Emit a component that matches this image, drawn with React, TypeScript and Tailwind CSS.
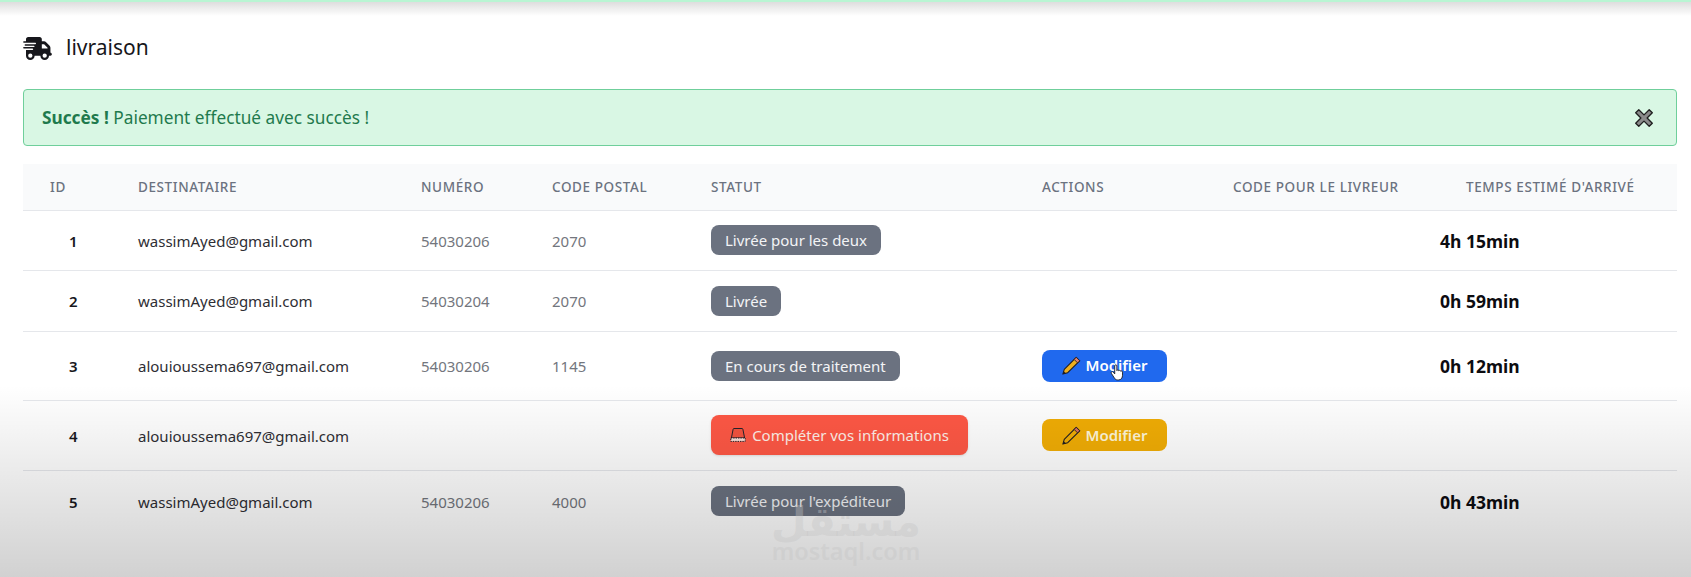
import React from 'react';
import { FaTruckFast } from 'react-icons/fa6';

const Pencil: React.FC<{ body: string; tip: string }> = ({ body, tip }) => (
  <svg viewBox="0 0 20 20" className="w-[21px] h-[21px] shrink-0 -mx-[1px]">
    <path d="M14.5 2.2 17.8 5.5 6.4 16.9 1.8 18.2 3.1 13.6Z" fill={body} stroke="#1c1c24" strokeWidth="1" strokeLinejoin="round" />
    <path d="M14.5 2.2 17.8 5.5 15.8 7.5 12.5 4.2Z" fill={tip} stroke="#1c1c24" strokeWidth="0.8" strokeLinejoin="round" />
    <path d="M1.8 18.2 2.6 15.4 4.6 17.4Z" fill="#1c1c24" />
  </svg>
);

const Siren = () => (
  <svg viewBox="0 0 16 16" className="w-[16px] h-[16px] shrink-0">
    <path d="M4 1.5h8c.5 0 .8.3.9.8L14.6 11H1.4L3.1 2.3c.1-.5.4-.8.9-.8Z" fill="#f4533f" stroke="#23232b" strokeWidth="1" strokeLinejoin="round" />
    <path d="M.8 11h14.4v3.4H.8Z" fill="#f9ddd6" stroke="#23232b" strokeWidth="1" strokeDasharray="1.4 1" />
  </svg>
);

const CloseMark = () => (
  <svg viewBox="0 0 20 20" className="w-[26px] h-[26px]">
    <path d="M3.6 6 6 3.6 10 7.6 14 3.6 16.4 6 12.4 10 16.4 14 14 16.4 10 12.4 6 16.4 3.6 14 7.6 10Z" fill="#8b8b8b" stroke="#1f1f1f" strokeWidth="1" strokeLinejoin="round" />
  </svg>
);

const HandCursor = () => (
  <svg viewBox="0 0 16 20" className="w-[14px] h-[21px]">
    <path d="M5.4 2.4c0-1.6 2.4-1.6 2.4 0v5.4c.5-1.1 2.2-.9 2.3.3.5-.9 2.1-.7 2.2.5.6-.6 2-.3 2 1v3.6c0 2.9-1.7 5.3-4.4 5.3H8.5c-1.6 0-2.6-.8-3.5-2.2L1.6 11c-.9-1.5 1-2.8 2.1-1.4l1.7 2Z" fill="#fff" stroke="#1b1b1b" strokeWidth="1" strokeLinejoin="round" />
  </svg>
);

const rows = [
  { id: 1, mail: 'wassimAyed@gmail.com', num: '54030206', cp: '2070', status: 'Livrée pour les deux', eta: '4h 15min', h: 'h-[60px]' },
  { id: 2, mail: 'wassimAyed@gmail.com', num: '54030204', cp: '2070', status: 'Livrée', eta: '0h 59min', h: 'h-[61px]' },
  { id: 3, mail: 'alouioussema697@gmail.com', num: '54030206', cp: '1145', status: 'En cours de traitement', eta: '0h 12min', h: 'h-[69px]', action: 'blue' },
  { id: 4, mail: 'alouioussema697@gmail.com', num: '', cp: '', status: '', eta: '', h: 'h-[70px]', action: 'amber' },
  { id: 5, mail: 'wassimAyed@gmail.com', num: '54030206', cp: '4000', status: "Livrée pour l'expéditeur", eta: '0h 43min', h: 'h-[62px]' },
];

const headers = [
  { label: 'ID', cls: 'w-[89px] pl-[27px]' },
  { label: 'DESTINATAIRE', cls: 'w-[283px] pl-[26px]' },
  { label: 'NUMÉRO', cls: 'w-[157px] pl-[26px]' },
  { label: 'CODE POSTAL', cls: 'w-[159px]' },
  { label: 'STATUT', cls: 'w-[331px]' },
  { label: 'ACTIONS', cls: 'w-[191px]' },
  { label: 'CODE POUR LE LIVREUR', cls: 'w-[207px]' },
  { label: "TEMPS ESTIMÉ D'ARRIVÉ", cls: 'pl-[26px]' },
];

export default function App() {
  return (
    <div className="relative h-[577px] w-full overflow-hidden bg-white font-['Noto_Sans',sans-serif]">
      <div className="pl-[23px] pr-[14px] pt-[33px]">
        <div className="flex items-center gap-[14px] h-[30px]">
          <FaTruckFast className="w-[29px] h-[23px] text-[#17171c]" />
          <h1 className="text-[21px] text-[#17171c]">livraison</h1>
        </div>

        <div className="mt-[26px] flex h-[57px] items-center justify-between rounded-[4px] border border-[#6fcf9b] bg-[#d9f7e4] pl-[18px] pr-[19px] text-[17.25px] text-[#1f7a4d]">
          <p className="pt-[1px]">
            <span className="font-bold">Succès !</span> Paiement effectué avec succès !
          </p>
          <CloseMark />
        </div>

        <table className="mt-[18px] w-full table-fixed border-collapse">
          <thead>
            <tr className="h-[46px] bg-[#f9fafb] border-b border-[#e5e7eb]">
              {headers.map((col) => (
                <th key={col.label} className={`${col.cls} text-left text-[13.5px] font-medium tracking-[0.6px] text-[#6b7280]`}>
                  {col.label}
                </th>
              ))}
            </tr>
          </thead>
          <tbody>
            {rows.map((row, i) => (
              <tr key={row.id} className={`${row.h} ${i < rows.length - 1 ? 'border-b border-[#e5e7eb]' : ''}`}>
                <td className="pl-[46px] pt-[2px] text-[15px] font-semibold text-[#17171c]">{row.id}</td>
                <td className="pl-[26px] pt-[2px] text-[15px] text-[#2e2e34]">{row.mail}</td>
                <td className="pl-[26px] pt-[2px] text-[15px] text-[#73767d]">{row.num}</td>
                <td className="pt-[2px] text-[15px] text-[#73767d]">{row.cp}</td>
                <td>
                  {row.status ? (
                    <span className="inline-block rounded-[8px] bg-[#6b7280] px-[14px] py-[4px] text-[15px] leading-[22px] text-[#f3f4f6]">
                      {row.status}
                    </span>
                  ) : (
                    <span className="inline-flex h-[40px] w-[257px] items-center justify-center gap-[6px] rounded-[8px] bg-[#ff5845] text-[15px] text-[#fff0e8] shadow-sm">
                      <Siren />
                      Compléter vos informations
                    </span>
                  )}
                </td>
                <td>
                  {row.action && (
                    <button className={`relative flex h-[32px] w-[125px] items-center justify-center gap-[5px] rounded-[8px] text-[15px] font-semibold ${row.action === 'blue' ? 'bg-[#2069ee] text-white' : 'bg-[#f1ad05] text-[#fff6d8]'}`}>
                      {row.action === 'blue' ? <Pencil body="#eeb01e" tip="#e7826d" /> : <Pencil body="#f1ad05" tip="#d9705f" />}
                      Modifier
                      {row.action === 'blue' && (
                        <span className="absolute left-[68px] top-[12px]">
                          <HandCursor />
                        </span>
                      )}
                    </button>
                  )}
                </td>
                <td />
                <td className="pt-[2px] text-[17.5px] font-bold text-[#0c0c10]">{row.eta}</td>
              </tr>
            ))}
          </tbody>
        </table>
      </div>

      {/* video fade over the page */}
      <div className="pointer-events-none absolute inset-x-0 top-0 h-[16px] bg-gradient-to-b from-[#d9d9d9] to-white/0" />
      <div className="pointer-events-none absolute inset-x-0 top-0 h-[2px] bg-[#b9f5d3]" />
      <div className="pointer-events-none absolute inset-x-0 top-[385px] bottom-0 bg-gradient-to-b from-black/0 to-black/[0.18]" />

      {/* watermark */}
      <div className="pointer-events-none absolute left-[770px] top-[504px] flex w-[152px] flex-col items-center text-[#c4c4c4]/40">
        <span className="font-['DejaVu_Sans',sans-serif] text-[41px] font-bold leading-[36px]">مستقل</span>
        <span className="text-[23.5px] font-semibold leading-[22px]">mostaql.com</span>
      </div>
    </div>
  );
}
